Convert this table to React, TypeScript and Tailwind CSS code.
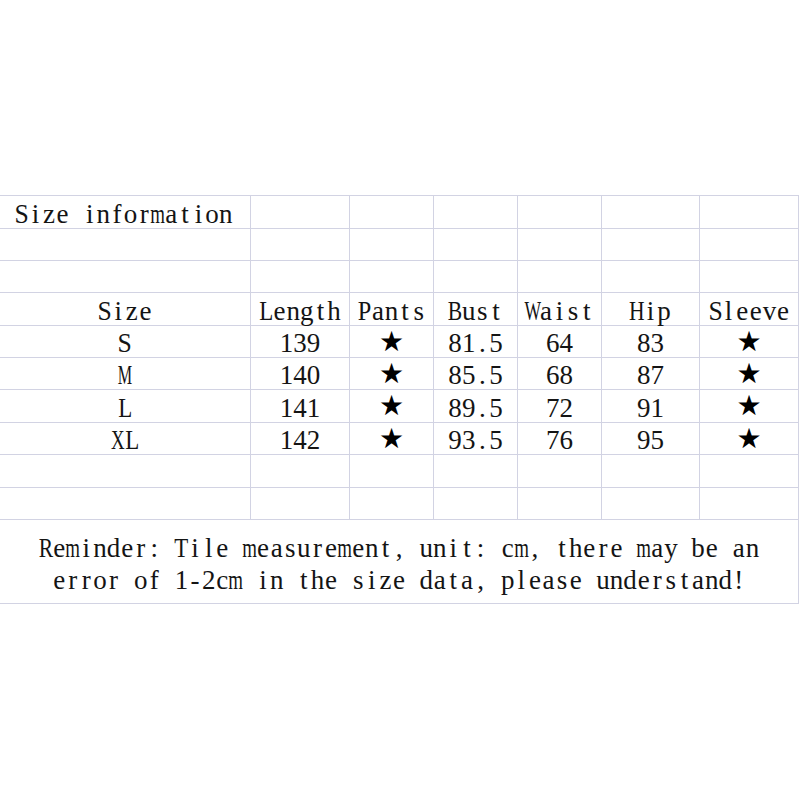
import React from "react";

const border = "border-r border-b border-[#d2d3e3]";
const font =
  "font-['Liberation_Serif',serif] text-[27px] text-[#141414] whitespace-nowrap";

const scaleMap: Record<string, string> = {
  m: "scale-x-[0.7]",
  w: "scale-x-[0.75]",
  M: "scale-x-[0.6]",
  W: "scale-x-[0.65]",
  X: "scale-x-[0.7]",
  R: "scale-x-[0.8]",
  T: "scale-x-[0.85]",
  B: "scale-x-[0.8]",
  H: "scale-x-[0.8]",
  L: "scale-x-[0.85]",
  P: "scale-x-[0.9]",
  S: "scale-x-[0.95]",
};

function Mono({ text }: { text: string }) {
  return (
    <span className={`${font} inline-flex`}>
      {[...text].map((c, i) => (
        <span key={i} className="flex justify-center w-[13.6px]">
          <span className={`inline-block ${scaleMap[c] ?? ""}`}>
            {c === " " ? "\u00a0" : c}
          </span>
        </span>
      ))}
    </span>
  );
}

function Cell({ children, star }: { children?: string | null; star?: boolean }) {
  return (
    <div className={`${border} flex items-center justify-center pt-[4px]`}>
      {star ? (
        <span className="font-['DejaVu_Sans',sans-serif] text-[28px] leading-none text-black -mt-[4px]">
          ★
        </span>
      ) : (
        <Mono text={children ?? ""} />
      )}
    </div>
  );
}

const header = ["Size", "Length", "Pants", "Bust", "Waist", "Hip", "Sleeve"];
const rows: (string | null)[][] = [
  ["S", "139", null, "81.5", "64", "83", null],
  ["M", "140", null, "85.5", "68", "87", null],
  ["L", "141", null, "89.5", "72", "91", null],
  ["XL", "142", null, "93.5", "76", "95", null],
];

function EmptyRow() {
  return (
    <>
      {header.map((h) => (
        <div key={h} className={border} />
      ))}
    </>
  );
}

export default function App() {
  return (
    <div className="w-[800px] h-[800px] bg-white pt-[195px] overflow-hidden">
      <div className="grid w-[799px] grid-cols-[251px_99px_84px_84px_84px_98px_99px] grid-rows-[33px_32px_32px_33px_32px_32px_33px_32px_33px_32px_84px] border-t border-[#d2d3e3]">
        <div className={`${border} flex items-center justify-start pl-[15px] pt-[4px]`}>
          <Mono text="Size information" />
        </div>
        {header.slice(1).map((h) => (
          <div key={h} className={border} />
        ))}
        <EmptyRow />
        <EmptyRow />
        {header.map((h) => (
          <Cell key={h}>{h}</Cell>
        ))}
        {rows.map((r, i) =>
          r.map((v, j) => (
            <Cell key={`${i}-${j}`} star={v === null}>
              {v}
            </Cell>
          ))
        )}
        <EmptyRow />
        <EmptyRow />
        <div className={`${border} col-span-7 flex flex-col items-center justify-center pt-[4px]`}>
          <div className="leading-[32px] h-[32px] flex items-center">
            <Mono text="Reminder: Tile measurement, unit: cm, there may be an" />
          </div>
          <div className="leading-[32px] h-[32px] flex items-center">
            <Mono text="error of 1-2cm in the size data, please understand!" />
          </div>
        </div>
      </div>
    </div>
  );
}
